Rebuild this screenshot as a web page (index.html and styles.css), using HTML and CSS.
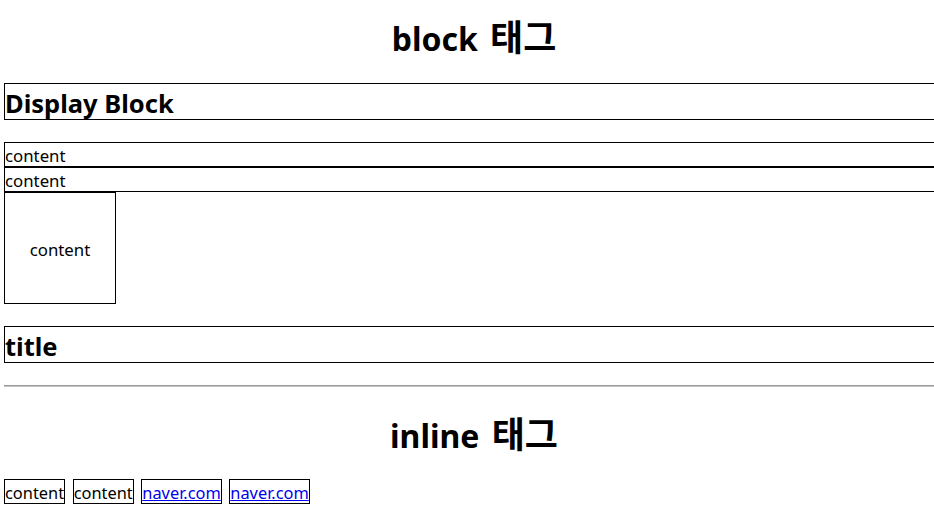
FILE: index.html
```html
<!DOCTYPE html>
<html lang="ko">
<head>
<meta charset="utf-8">
<title>block / inline</title>
<link rel="stylesheet" href="styles.css">
</head>
<body>
<div class="page">
  <h1 class="heading heading-block">block <span class="ko">태그</span></h1>
  <h2 class="boxed-title">Display Block</h2>
  <div class="line-box">content</div>
  <div class="line-box">content</div>
  <div class="square">content</div>
  <h2 class="boxed-title title-gap">title</h2>
  <hr class="divider">
  <h1 class="heading heading-inline">inline <span class="ko">태그</span></h1>
  <div class="inline-row"><span class="inline-item">content</span> <span class="inline-item">content</span> <a class="inline-item link" href="#">naver.com</a> <a class="inline-item link" href="#">naver.com</a></div>
</div>
</body>
</html>
```
FILE: styles.css
```css
html, body {
  margin: 0;
  padding: 0;
  overflow: hidden;
  background: #fff;
}
body {
  font-family: "Noto Sans", "Noto Sans CJK KR", sans-serif;
  color: #000;
  font-size: 16.8px;
}
.page {
  width: 940px;
  padding-left: 4px;
}
.heading {
  font-size: 32px;
  font-weight: bold;
  text-align: center;
  line-height: 47px;
  margin: 0;
}
.ko {
  font-family: "Noto Sans CJK KR", sans-serif;
  font-size: 36px;
  line-height: 1;
  margin-left: 4px;
}
.heading-block {
  margin-top: 15px;
  margin-bottom: 21px;
}
.boxed-title {
  font-size: 25.5px;
  font-weight: bold;
  line-height: 32px;
  padding-top: 3px;
  border: 1px solid #000;
  margin: 0 0 22px;
}
.title-gap {
  margin-top: 22px;
}
.line-box {
  border: 1px solid #000;
  line-height: 21px;
  padding-top: 2px;
}
.square {
  width: 110px;
  height: 108px;
  padding-top: 2px;
  border: 1px solid #000;
  display: flex;
  align-items: center;
  justify-content: center;
}
.divider {
  margin: 0;
  height: 0;
  border: 0;
  border-top: 1px solid #9a9a9a;
  border-bottom: 1px solid #c4c4c4;
}
.heading-inline {
  margin-top: 25px;
  margin-bottom: 20px;
}
.inline-row {
  font-size: 16.4px;
  line-height: 20px;
  display: flex;
  gap: 7.5px;
}
.inline-item {
  border: 1px solid #000;
  padding-top: 3px;
  display: block;
}
.link {
  color: #0000ee;
  text-decoration: underline;
}
```
